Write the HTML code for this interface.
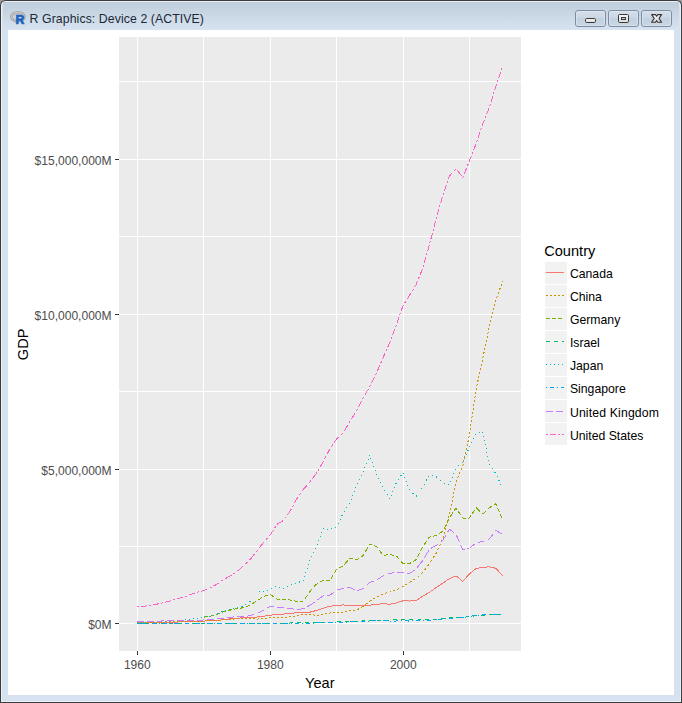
<!DOCTYPE html><html><head><meta charset="utf-8"><style>
html,body{margin:0;padding:0;width:682px;height:703px;overflow:hidden;background:#fff}
svg{display:block;font-family:"Liberation Sans",sans-serif}
</style></head><body>
<svg width="682" height="703" viewBox="0 0 682 703">
<defs><linearGradient id="tb" x1="0" y1="0" x2="0" y2="1"><stop offset="0" stop-color="#bfcedb"/><stop offset="1" stop-color="#d7e3f0"/></linearGradient>
<linearGradient id="btn" x1="0" y1="0" x2="0" y2="1"><stop offset="0" stop-color="#d5dfea"/><stop offset="0.45" stop-color="#cbd7e4"/><stop offset="0.5" stop-color="#c3d0de"/><stop offset="1" stop-color="#c9d6e4"/></linearGradient>
<linearGradient id="ico" x1="0" y1="0" x2="0" y2="1"><stop offset="0" stop-color="#f7f7f7"/><stop offset="1" stop-color="#d9d9d9"/></linearGradient></defs>
<rect x="0" y="0" width="682" height="10" fill="#9c9c9c"/>
<path d="M0,703 V6 Q0,0 6,0 H676 Q682,0 682,6 V703 Z" fill="#3d3d3d"/>
<path d="M1,702 V6 Q1,1 6,1 H676 Q681,1 681,6 V702 Z" fill="#eaf0f7"/>
<path d="M2,701 V7 Q2,2 7,2 H675 Q680,2 680,7 V701 Z" fill="#d6e2ef"/>
<rect x="3" y="2" width="676" height="28" fill="url(#tb)"/>
<rect x="8" y="30" width="666" height="665" fill="#fff"/>
<ellipse cx="17.9" cy="16.8" rx="6.5" ry="4.3" fill="none" stroke="#a9a9a9" stroke-width="3"/>
<ellipse cx="17.9" cy="16.6" rx="6.3" ry="4.0" fill="none" stroke="#d2d2d2" stroke-width="0.9"/>
<text x="15.6" y="23.8" font-size="12.2" font-weight="bold" fill="#1b62c4" stroke="#1b62c4" stroke-width="0.7">R</text>
<text x="29.6" y="22.5" font-size="12.25" letter-spacing="0.1" fill="#1c2838">R Graphics: Device 2 (ACTIVE)</text>
<rect x="575.5" y="10.5" width="30" height="16" rx="2.5" fill="url(#btn)" stroke="#7d8ca4"/>
<rect x="576.5" y="11.5" width="28" height="14" rx="1.5" fill="none" stroke="#e3eaf2" stroke-opacity="0.6"/>
<rect x="608.5" y="10.5" width="30" height="16" rx="2.5" fill="url(#btn)" stroke="#7d8ca4"/>
<rect x="609.5" y="11.5" width="28" height="14" rx="1.5" fill="none" stroke="#e3eaf2" stroke-opacity="0.6"/>
<rect x="641.5" y="10.5" width="30" height="16" rx="2.5" fill="url(#btn)" stroke="#7d8ca4"/>
<rect x="642.5" y="11.5" width="28" height="14" rx="1.5" fill="none" stroke="#e3eaf2" stroke-opacity="0.6"/>
<rect x="585.5" y="18.5" width="10" height="4" rx="1.2" fill="url(#ico)" stroke="#3a3a3a"/>
<rect x="618.5" y="14.5" width="10" height="8" rx="1.2" fill="url(#ico)" stroke="#3a3a3a"/>
<rect x="621.5" y="17.5" width="4" height="2" fill="#c3cfdc" stroke="#3a3a3a"/>
<path d="M651.6,14.6 H655.5 L656.6,16.3 L657.7,14.6 H661.6 L659,18.4 L661.6,22.2 H657.7 L656.6,20.5 L655.5,22.2 H651.6 L654.2,18.4 Z" fill="url(#ico)" stroke="#363636" stroke-width="1.1" stroke-linejoin="round"/>
<rect x="119" y="37" width="402" height="614" fill="#ebebeb"/>
<rect x="137" y="37" width="1" height="614" fill="#fff"/>
<rect x="203" y="37" width="1" height="614" fill="#fff"/>
<rect x="270" y="37" width="1" height="614" fill="#fff"/>
<rect x="336" y="37" width="1" height="614" fill="#fff"/>
<rect x="403" y="37" width="1" height="614" fill="#fff"/>
<rect x="469" y="37" width="1" height="614" fill="#fff"/>
<rect x="119" y="81" width="402" height="1" fill="#fff"/>
<rect x="119" y="159" width="402" height="1" fill="#fff"/>
<rect x="119" y="236" width="402" height="1" fill="#fff"/>
<rect x="119" y="314" width="402" height="1" fill="#fff"/>
<rect x="119" y="391" width="402" height="1" fill="#fff"/>
<rect x="119" y="469" width="402" height="1" fill="#fff"/>
<rect x="119" y="546" width="402" height="1" fill="#fff"/>
<rect x="119" y="623" width="402" height="1" fill="#fff"/>
<path d="M137.40,622.53 L144.04,622.54 L150.68,622.52 L157.32,622.44 L163.96,622.32 L170.60,622.19 L177.24,622.02 L183.88,621.91 L190.52,621.77 L197.16,621.59 L203.80,621.08 L210.44,620.73 L217.08,620.30 L223.72,619.74 L230.36,618.84 L237.00,618.42 L243.64,617.41 L250.28,617.25 L256.92,617.04 L263.56,616.28 L270.20,615.33 L276.84,614.33 L283.48,614.10 L290.12,613.27 L296.76,612.81 L303.40,612.52 L310.04,612.13 L316.68,610.46 L323.32,608.10 L329.96,606.32 L336.60,605.43 L343.24,604.92 L349.88,605.48 L356.52,605.95 L363.16,605.92 L369.80,605.12 L376.44,604.36 L383.08,603.61 L389.72,604.26 L396.36,602.89 L403.00,600.84 L409.64,601.02 L416.28,600.36 L422.92,596.20 L429.56,592.15 L436.20,587.63 L442.84,583.11 L449.48,578.51 L456.12,575.88 L462.76,581.38 L469.40,573.89 L476.04,568.47 L482.68,567.37 L489.32,566.80 L495.96,568.34 L502.60,575.78" fill="none" stroke="#F8766D" stroke-width="1" shape-rendering="crispEdges"/>
<g fill="none" stroke="#CD9600" stroke-width="1" shape-rendering="crispEdges"><path d="M137.40,621.95 L144.04,622.25" stroke-dasharray="2.002 2.002" stroke-dashoffset="0.000"/><path d="M144.04,622.25 L150.68,622.34" stroke-dasharray="2.000 2.000" stroke-dashoffset="2.640"/><path d="M150.68,622.34 L157.32,622.23" stroke-dasharray="2.000 2.000" stroke-dashoffset="1.280"/><path d="M157.32,622.23 L163.96,621.95" stroke-dasharray="2.002 2.002" stroke-dashoffset="3.923"/><path d="M163.96,621.95 L170.60,621.62" stroke-dasharray="2.002 2.002" stroke-dashoffset="2.563"/><path d="M170.60,621.62 L177.24,621.43" stroke-dasharray="2.001 2.001" stroke-dashoffset="1.201"/><path d="M177.24,621.43 L183.88,621.54" stroke-dasharray="2.000 2.000" stroke-dashoffset="3.841"/><path d="M183.88,621.54 L190.52,621.61" stroke-dasharray="2.000 2.000" stroke-dashoffset="2.480"/><path d="M190.52,621.61 L197.16,621.33" stroke-dasharray="2.002 2.002" stroke-dashoffset="1.121"/><path d="M197.16,621.33 L203.80,620.94" stroke-dasharray="2.004 2.004" stroke-dashoffset="3.767"/><path d="M203.80,620.94 L210.44,620.71" stroke-dasharray="2.001 2.001" stroke-dashoffset="2.401"/><path d="M210.44,620.71 L217.08,620.28" stroke-dasharray="2.004 2.004" stroke-dashoffset="1.042"/><path d="M217.08,620.28 L223.72,619.52" stroke-dasharray="2.013 2.013" stroke-dashoffset="3.704"/><path d="M223.72,619.52 L230.36,619.34" stroke-dasharray="2.001 2.001" stroke-dashoffset="2.321"/><path d="M230.36,619.34 L237.00,618.75" stroke-dasharray="2.008 2.008" stroke-dashoffset="0.964"/><path d="M237.00,618.75 L243.64,619.04" stroke-dasharray="2.002 2.002" stroke-dashoffset="3.604"/><path d="M243.64,619.04 L250.28,618.39" stroke-dasharray="2.010 2.010" stroke-dashoffset="2.251"/><path d="M250.28,618.39 L256.92,619.18" stroke-dasharray="2.014 2.014" stroke-dashoffset="0.886"/><path d="M256.92,619.18 L263.56,618.28" stroke-dasharray="2.018 2.018" stroke-dashoffset="3.552"/><path d="M263.56,618.28 L270.20,617.89" stroke-dasharray="2.004 2.004" stroke-dashoffset="2.164"/><path d="M270.20,617.89 L276.84,617.74" stroke-dasharray="2.000 2.000" stroke-dashoffset="0.800"/><path d="M276.84,617.74 L283.48,617.46" stroke-dasharray="2.002 2.002" stroke-dashoffset="3.443"/><path d="M283.48,617.46 L290.12,616.66" stroke-dasharray="2.014 2.014" stroke-dashoffset="2.095"/><path d="M290.12,616.66 L296.76,615.76" stroke-dasharray="2.018 2.018" stroke-dashoffset="0.727"/><path d="M296.76,615.76 L303.40,614.23" stroke-dasharray="2.053 2.053" stroke-dashoffset="3.449"/><path d="M303.40,614.23 L310.04,614.50" stroke-dasharray="2.002 2.002" stroke-dashoffset="2.002"/><path d="M310.04,614.50 L316.68,615.36" stroke-dasharray="2.017 2.017" stroke-dashoffset="0.645"/><path d="M316.68,615.36 L323.32,614.14" stroke-dasharray="2.034 2.034" stroke-dashoffset="3.335"/><path d="M323.32,614.14 L329.96,613.04" stroke-dasharray="2.027 2.027" stroke-dashoffset="1.946"/><path d="M329.96,613.04 L336.60,612.64" stroke-dasharray="2.004 2.004" stroke-dashoffset="0.561"/><path d="M336.60,612.64 L343.24,611.94" stroke-dasharray="2.011 2.011" stroke-dashoffset="3.218"/><path d="M343.24,611.94 L349.88,610.59" stroke-dasharray="2.041 2.041" stroke-dashoffset="1.877"/><path d="M349.88,610.59 L356.52,610.04" stroke-dasharray="2.007 2.007" stroke-dashoffset="0.482"/><path d="M356.52,610.04 L363.16,606.34" stroke-dasharray="2.289 2.289" stroke-dashoffset="3.572"/><path d="M363.16,606.34 L369.80,601.08" stroke-dasharray="2.552 2.552" stroke-dashoffset="2.246"/><path d="M369.80,601.08 L376.44,597.08" stroke-dasharray="2.334 2.334" stroke-dashoffset="0.467"/><path d="M376.44,597.08 L383.08,594.05" stroke-dasharray="2.198 2.198" stroke-dashoffset="3.341"/><path d="M383.08,594.05 L389.72,591.97" stroke-dasharray="2.096 2.096" stroke-dashoffset="1.761"/><path d="M389.72,591.97 L396.36,589.96" stroke-dasharray="2.090 2.090" stroke-dashoffset="0.334"/><path d="M396.36,589.96 L403.00,586.33" stroke-dasharray="2.279 2.279" stroke-dashoffset="3.373"/><path d="M403.00,586.33 L409.64,582.37" stroke-dasharray="2.329 2.329" stroke-dashoffset="1.863"/><path d="M409.64,582.37 L416.28,578.31" stroke-dasharray="2.344 2.344" stroke-dashoffset="0.281"/><path d="M416.28,578.31 L422.92,572.44" stroke-dasharray="2.669 2.669" stroke-dashoffset="3.843"/><path d="M422.92,572.44 L429.56,563.32" stroke-dasharray="2.473 2.473" stroke-dashoffset="1.880"/><path d="M429.56,563.32 L436.20,553.09" stroke-dasharray="2.384 2.384" stroke-dashoffset="3.154"/><path d="M436.20,553.09 L442.84,538.67" stroke-dasharray="2.202 2.202" stroke-dashoffset="0.963"/><path d="M442.84,538.67 L449.48,513.92" stroke-dasharray="2.071 2.071" stroke-dashoffset="3.409"/><path d="M449.48,513.92 L456.12,481.56" stroke-dasharray="2.042 2.042" stroke-dashoffset="0.043"/><path d="M456.12,481.56 L462.76,465.74" stroke-dasharray="2.169 2.169" stroke-dashoffset="0.432"/><path d="M462.76,465.74 L469.40,435.09" stroke-dasharray="2.046 2.046" stroke-dashoffset="0.232"/><path d="M469.40,435.09 L476.04,389.56" stroke-dasharray="2.021 2.021" stroke-dashoffset="2.902"/><path d="M476.04,389.56 L482.68,359.00" stroke-dasharray="2.047 2.047" stroke-dashoffset="0.415"/><path d="M482.68,359.00 L489.32,326.62" stroke-dasharray="2.042 2.042" stroke-dashoffset="3.026"/><path d="M489.32,326.62 L495.96,299.55" stroke-dasharray="2.059 2.059" stroke-dashoffset="3.440"/><path d="M495.96,299.55 L502.60,281.54" stroke-dasharray="2.132 2.132" stroke-dashoffset="2.573"/></g>
<g fill="none" stroke="#7CAE00" stroke-width="1" shape-rendering="crispEdges"><path d="M203.80,617.12 L210.44,616.07" stroke-dasharray="4.050 2.025" stroke-dashoffset="0.000"/><path d="M210.44,616.07 L217.08,614.53" stroke-dasharray="4.107 2.054" stroke-dashoffset="0.657"/><path d="M217.08,614.53 L223.72,611.48" stroke-dasharray="4.402 2.201" stroke-dashoffset="1.409"/><path d="M223.72,611.48 L230.36,610.03" stroke-dasharray="4.094 2.047" stroke-dashoffset="1.965"/><path d="M230.36,610.03 L237.00,608.62" stroke-dasharray="4.088 2.044" stroke-dashoffset="2.616"/><path d="M237.00,608.62 L243.64,607.72" stroke-dasharray="4.037 2.018" stroke-dashoffset="3.229"/><path d="M243.64,607.72 L250.28,605.22" stroke-dasharray="4.274 2.137" stroke-dashoffset="4.103"/><path d="M250.28,605.22 L256.92,600.89" stroke-dasharray="4.775 2.387" stroke-dashoffset="5.347"/><path d="M256.92,600.89 L263.56,596.54" stroke-dasharray="4.784 2.392" stroke-dashoffset="6.123"/><path d="M263.56,596.54 L270.20,594.40" stroke-dasharray="4.202 2.101" stroke-dashoffset="6.050"/><path d="M270.20,594.40 L276.84,599.04" stroke-dasharray="4.878 2.439" stroke-dashoffset="0.488"/><path d="M276.84,599.04 L283.48,599.78" stroke-dasharray="4.025 2.012" stroke-dashoffset="1.046"/><path d="M283.48,599.78 L290.12,599.96" stroke-dasharray="4.002 2.001" stroke-dashoffset="1.681"/><path d="M290.12,599.96 L296.76,601.37" stroke-dasharray="4.089 2.044" stroke-dashoffset="2.372"/><path d="M296.76,601.37 L303.40,601.14" stroke-dasharray="4.002 2.001" stroke-dashoffset="2.962"/><path d="M303.40,601.14 L310.04,591.44" stroke-dasharray="4.847 2.423" stroke-dashoffset="4.362"/><path d="M310.04,591.44 L316.68,583.67" stroke-dasharray="5.263 2.632" stroke-dashoffset="1.715"/><path d="M316.68,583.67 L323.32,580.46" stroke-dasharray="4.445 2.222" stroke-dashoffset="3.409"/><path d="M323.32,580.46 L329.96,580.54" stroke-dasharray="4.000 2.000" stroke-dashoffset="3.708"/><path d="M329.96,580.54 L336.60,569.00" stroke-dasharray="4.614 2.307" stroke-dashoffset="5.015"/><path d="M336.60,569.00 L343.24,565.99" stroke-dasharray="4.391 2.195" stroke-dashoffset="4.276"/><path d="M343.24,565.99 L349.88,557.86" stroke-dasharray="5.166 2.583" stroke-dashoffset="5.857"/><path d="M349.88,557.86 L356.52,559.73" stroke-dasharray="4.155 2.077" stroke-dashoffset="0.687"/><path d="M356.52,559.73 L363.16,555.59" stroke-dasharray="4.713 2.357" stroke-dashoffset="1.533"/><path d="M363.16,555.59 L369.80,543.81" stroke-dasharray="4.592 2.296" stroke-dashoffset="2.229"/><path d="M369.80,543.81 L376.44,546.55" stroke-dasharray="4.327 2.164" stroke-dashoffset="1.858"/><path d="M376.44,546.55 L383.08,555.39" stroke-dasharray="5.004 2.502" stroke-dashoffset="2.949"/><path d="M383.08,555.39 L389.72,554.54" stroke-dasharray="4.032 2.016" stroke-dashoffset="5.230"/><path d="M389.72,554.54 L396.36,555.93" stroke-dasharray="4.086 2.043" stroke-dashoffset="5.954"/><path d="M396.36,555.93 L403.00,563.57" stroke-dasharray="5.298 2.649" stroke-dashoffset="0.621"/><path d="M403.00,563.57 L409.64,563.61" stroke-dasharray="4.000 2.000" stroke-dashoffset="2.115"/><path d="M409.64,563.61 L416.28,559.51" stroke-dasharray="4.703 2.351" stroke-dashoffset="3.239"/><path d="M416.28,559.51 L422.92,546.42" stroke-dasharray="4.485 2.243" stroke-dashoffset="3.807"/><path d="M422.92,546.42 L429.56,536.74" stroke-dasharray="4.851 2.426" stroke-dashoffset="5.437"/><path d="M429.56,536.74 L436.20,535.74" stroke-dasharray="4.046 2.023" stroke-dashoffset="2.184"/><path d="M436.20,535.74 L442.84,531.16" stroke-dasharray="4.856 2.428" stroke-dashoffset="3.398"/><path d="M442.84,531.16 L449.48,517.84" stroke-dasharray="4.469 2.234" stroke-dashoffset="3.842"/><path d="M449.48,517.84 L456.12,507.95" stroke-dasharray="4.818 2.409" stroke-dashoffset="5.743"/><path d="M456.12,507.95 L462.76,518.28" stroke-dasharray="4.755 2.377" stroke-dashoffset="3.159"/><path d="M462.76,518.28 L469.40,518.10" stroke-dasharray="4.001 2.001" stroke-dashoffset="0.989"/><path d="M469.40,518.10 L476.04,507.56" stroke-dasharray="4.728 2.364" stroke-dashoffset="1.926"/><path d="M476.04,507.56 L482.68,514.18" stroke-dasharray="5.646 2.823" stroke-dashoffset="0.233"/><path d="M482.68,514.18 L489.32,507.72" stroke-dasharray="5.578 2.789" stroke-dashoffset="1.122"/><path d="M489.32,507.72 L495.96,503.80" stroke-dasharray="4.646 2.323" stroke-dashoffset="1.678"/><path d="M495.96,503.80 L502.60,519.75" stroke-dasharray="4.333 2.166" stroke-dashoffset="2.258"/></g>
<g fill="none" stroke="#00BE67" stroke-width="1" shape-rendering="crispEdges"><path d="M137.40,623.72 L144.04,623.71" stroke-dasharray="4.000 4.000" stroke-dashoffset="0.000"/><path d="M144.04,623.71 L150.68,623.70" stroke-dasharray="4.000 4.000" stroke-dashoffset="6.640"/><path d="M150.68,623.70 L157.32,623.69" stroke-dasharray="4.000 4.000" stroke-dashoffset="5.280"/><path d="M157.32,623.69 L163.96,623.68" stroke-dasharray="4.000 4.000" stroke-dashoffset="3.920"/><path d="M163.96,623.68 L170.60,623.68" stroke-dasharray="4.000 4.000" stroke-dashoffset="2.560"/><path d="M170.60,623.68 L177.24,623.67" stroke-dasharray="4.000 4.000" stroke-dashoffset="1.200"/><path d="M177.24,623.67 L183.88,623.66" stroke-dasharray="4.000 4.000" stroke-dashoffset="7.840"/><path d="M183.88,623.66 L190.52,623.65" stroke-dasharray="4.000 4.000" stroke-dashoffset="6.480"/><path d="M190.52,623.65 L197.16,623.64" stroke-dasharray="4.000 4.000" stroke-dashoffset="5.120"/><path d="M197.16,623.64 L203.80,623.63" stroke-dasharray="4.000 4.000" stroke-dashoffset="3.760"/><path d="M203.80,623.63 L210.44,623.58" stroke-dasharray="4.000 4.000" stroke-dashoffset="2.400"/><path d="M210.44,623.58 L217.08,623.53" stroke-dasharray="4.000 4.000" stroke-dashoffset="1.040"/><path d="M217.08,623.53 L223.72,623.48" stroke-dasharray="4.000 4.000" stroke-dashoffset="7.680"/><path d="M223.72,623.48 L230.36,623.43" stroke-dasharray="4.000 4.000" stroke-dashoffset="6.320"/><path d="M230.36,623.43 L237.00,623.39" stroke-dasharray="4.000 4.000" stroke-dashoffset="4.960"/><path d="M237.00,623.39 L243.64,623.33" stroke-dasharray="4.000 4.000" stroke-dashoffset="3.600"/><path d="M243.64,623.33 L250.28,623.27" stroke-dasharray="4.000 4.000" stroke-dashoffset="2.240"/><path d="M250.28,623.27 L256.92,623.21" stroke-dasharray="4.000 4.000" stroke-dashoffset="0.880"/><path d="M256.92,623.21 L263.56,623.16" stroke-dasharray="4.000 4.000" stroke-dashoffset="7.520"/><path d="M263.56,623.16 L270.20,623.10" stroke-dasharray="4.000 4.000" stroke-dashoffset="6.160"/><path d="M270.20,623.10 L276.84,623.07" stroke-dasharray="4.000 4.000" stroke-dashoffset="4.800"/><path d="M276.84,623.07 L283.48,623.04" stroke-dasharray="4.000 4.000" stroke-dashoffset="3.440"/><path d="M283.48,623.04 L290.12,623.01" stroke-dasharray="4.000 4.000" stroke-dashoffset="2.080"/><path d="M290.12,623.01 L296.76,622.98" stroke-dasharray="4.000 4.000" stroke-dashoffset="0.720"/><path d="M296.76,622.98 L303.40,622.96" stroke-dasharray="4.000 4.000" stroke-dashoffset="7.360"/><path d="M303.40,622.96 L310.04,622.76" stroke-dasharray="4.002 4.002" stroke-dashoffset="6.003"/><path d="M310.04,622.76 L316.68,622.56" stroke-dasharray="4.002 4.002" stroke-dashoffset="4.642"/><path d="M316.68,622.56 L323.32,622.36" stroke-dasharray="4.002 4.002" stroke-dashoffset="3.281"/><path d="M323.32,622.36 L329.96,622.16" stroke-dasharray="4.002 4.002" stroke-dashoffset="1.921"/><path d="M329.96,622.16 L336.60,621.96" stroke-dasharray="4.002 4.002" stroke-dashoffset="0.560"/><path d="M336.60,621.96 L343.24,621.71" stroke-dasharray="4.003 4.003" stroke-dashoffset="7.205"/><path d="M343.24,621.71 L349.88,621.46" stroke-dasharray="4.003 4.003" stroke-dashoffset="5.844"/><path d="M349.88,621.46 L356.52,621.21" stroke-dasharray="4.003 4.003" stroke-dashoffset="4.483"/><path d="M356.52,621.21 L363.16,620.96" stroke-dasharray="4.003 4.003" stroke-dashoffset="3.122"/><path d="M363.16,620.96 L369.80,620.71" stroke-dasharray="4.003 4.003" stroke-dashoffset="1.761"/><path d="M369.80,620.71 L376.44,620.51" stroke-dasharray="4.002 4.002" stroke-dashoffset="0.400"/><path d="M376.44,620.51 L383.08,620.32" stroke-dasharray="4.002 4.002" stroke-dashoffset="7.043"/><path d="M383.08,620.32 L389.72,620.12" stroke-dasharray="4.002 4.002" stroke-dashoffset="5.682"/><path d="M389.72,620.12 L396.36,619.92" stroke-dasharray="4.002 4.002" stroke-dashoffset="4.322"/><path d="M396.36,619.92 L403.00,619.73" stroke-dasharray="4.002 4.002" stroke-dashoffset="2.961"/><path d="M403.00,619.73 L409.64,619.89" stroke-dasharray="4.001 4.001" stroke-dashoffset="1.600"/><path d="M409.64,619.89 L416.28,620.06" stroke-dasharray="4.001 4.001" stroke-dashoffset="0.240"/><path d="M416.28,620.06 L422.92,619.83" stroke-dasharray="4.002 4.002" stroke-dashoffset="6.884"/><path d="M422.92,619.83 L429.56,619.61" stroke-dasharray="4.002 4.002" stroke-dashoffset="5.523"/><path d="M429.56,619.61 L436.20,619.38" stroke-dasharray="4.002 4.002" stroke-dashoffset="4.162"/><path d="M436.20,619.38 L442.84,618.62" stroke-dasharray="4.026 4.026" stroke-dashoffset="2.818"/><path d="M442.84,618.62 L449.48,617.86" stroke-dasharray="4.026 4.026" stroke-dashoffset="1.449"/><path d="M449.48,617.86 L456.12,617.09" stroke-dasharray="4.026 4.026" stroke-dashoffset="0.081"/><path d="M456.12,617.09 L462.76,617.40" stroke-dasharray="4.004 4.004" stroke-dashoffset="6.727"/><path d="M462.76,617.40 L469.40,616.57" stroke-dasharray="4.031 4.031" stroke-dashoffset="5.401"/><path d="M469.40,616.57 L476.04,615.71" stroke-dasharray="4.033 4.033" stroke-dashoffset="4.033"/><path d="M476.04,615.71 L482.68,615.84" stroke-dasharray="4.001 4.001" stroke-dashoffset="2.640"/><path d="M482.68,615.84 L489.32,614.75" stroke-dasharray="4.053 4.053" stroke-dashoffset="1.297"/><path d="M489.32,614.75 L495.96,614.25" stroke-dasharray="4.012 4.012" stroke-dashoffset="7.943"/><path d="M495.96,614.25 L502.60,614.54" stroke-dasharray="4.004 4.004" stroke-dashoffset="6.566"/></g>
<g fill="none" stroke="#00BFC4" stroke-width="1" shape-rendering="crispEdges"><path d="M137.40,622.43 L144.04,622.15" stroke-dasharray="1.001 3.003" stroke-dashoffset="0.000"/><path d="M144.04,622.15 L150.68,621.92" stroke-dasharray="1.001 3.002" stroke-dashoffset="2.641"/><path d="M150.68,621.92 L157.32,621.65" stroke-dasharray="1.001 3.003" stroke-dashoffset="1.281"/><path d="M157.32,621.65 L163.96,621.27" stroke-dasharray="1.002 3.005" stroke-dashoffset="3.926"/><path d="M163.96,621.27 L170.60,620.99" stroke-dasharray="1.001 3.003" stroke-dashoffset="2.562"/><path d="M170.60,620.99 L177.24,620.53" stroke-dasharray="1.002 3.007" stroke-dashoffset="1.203"/><path d="M177.24,620.53 L183.88,619.97" stroke-dasharray="1.004 3.011" stroke-dashoffset="3.854"/><path d="M183.88,619.97 L190.52,619.27" stroke-dasharray="1.006 3.017" stroke-dashoffset="2.494"/><path d="M190.52,619.27 L197.16,618.47" stroke-dasharray="1.007 3.021" stroke-dashoffset="1.128"/><path d="M197.16,618.47 L203.80,617.22" stroke-dasharray="1.018 3.053" stroke-dashoffset="3.826"/><path d="M203.80,617.22 L210.44,616.37" stroke-dasharray="1.008 3.025" stroke-dashoffset="2.420"/><path d="M210.44,616.37 L217.08,613.96" stroke-dasharray="1.064 3.191" stroke-dashoffset="1.106"/><path d="M217.08,613.96 L223.72,610.43" stroke-dasharray="1.132 3.397" stroke-dashoffset="4.168"/><path d="M223.72,610.43 L230.36,608.96" stroke-dasharray="1.024 3.073" stroke-dashoffset="2.376"/><path d="M230.36,608.96 L237.00,607.67" stroke-dasharray="1.019 3.057" stroke-dashoffset="0.978"/><path d="M237.00,607.67 L243.64,605.67" stroke-dasharray="1.044 3.133" stroke-dashoffset="3.760"/><path d="M243.64,605.67 L250.28,601.48" stroke-dasharray="1.182 3.545" stroke-dashoffset="2.647"/><path d="M250.28,601.48 L256.92,592.45" stroke-dasharray="1.241 3.723" stroke-dashoffset="1.092"/><path d="M256.92,592.45 L263.56,591.17" stroke-dasharray="1.018 3.055" stroke-dashoffset="1.954"/><path d="M263.56,591.17 L270.20,589.61" stroke-dasharray="1.027 3.082" stroke-dashoffset="0.574"/><path d="M270.20,589.61 L276.84,586.10" stroke-dasharray="1.131 3.394" stroke-dashoffset="3.618"/><path d="M276.84,586.10 L283.48,588.71" stroke-dasharray="1.075 3.224" stroke-dashoffset="1.976"/><path d="M283.48,588.71 L290.12,585.34" stroke-dasharray="1.121 3.363" stroke-dashoffset="0.537"/><path d="M290.12,585.34 L296.76,583.02" stroke-dasharray="1.059 3.178" stroke-dashoffset="3.304"/><path d="M296.76,583.02 L303.40,580.53" stroke-dasharray="1.068 3.204" stroke-dashoffset="1.878"/><path d="M303.40,580.53 L310.04,559.49" stroke-dasharray="1.049 3.146" stroke-dashoffset="0.418"/><path d="M310.04,559.49 L316.68,545.45" stroke-dasharray="1.106 3.319" stroke-dashoffset="1.585"/><path d="M316.68,545.45 L323.32,528.78" stroke-dasharray="1.076 3.229" stroke-dashoffset="3.739"/><path d="M323.32,528.78 L329.96,529.30" stroke-dasharray="1.003 3.009" stroke-dashoffset="0.144"/><path d="M329.96,529.30 L336.60,526.89" stroke-dasharray="1.064 3.191" stroke-dashoffset="2.961"/><path d="M336.60,526.89 L343.24,512.92" stroke-dasharray="1.107 3.322" stroke-dashoffset="1.576"/><path d="M343.24,512.92 L349.88,502.89" stroke-dasharray="1.199 3.597" stroke-dashoffset="4.068"/><path d="M349.88,502.89 L356.52,486.02" stroke-dasharray="1.075 3.224" stroke-dashoffset="1.534"/><path d="M356.52,486.02 L363.16,472.01" stroke-dasharray="1.107 3.320" stroke-dashoffset="2.540"/><path d="M363.16,472.01 L369.80,455.24" stroke-dasharray="1.076 3.227" stroke-dashoffset="0.328"/><path d="M369.80,455.24 L376.44,474.28" stroke-dasharray="1.059 3.177" stroke-dashoffset="1.137"/><path d="M376.44,474.28 L383.08,487.24" stroke-dasharray="1.124 3.371" stroke-dashoffset="0.123"/><path d="M383.08,487.24 L389.72,499.06" stroke-dasharray="1.147 3.441" stroke-dashoffset="1.228"/><path d="M389.72,499.06 L396.36,482.68" stroke-dasharray="1.079 3.237" stroke-dashoffset="0.964"/><path d="M396.36,482.68 L403.00,472.61" stroke-dasharray="1.198 3.594" stroke-dashoffset="1.528"/><path d="M403.00,472.61 L409.64,490.68" stroke-dasharray="1.065 3.196" stroke-dashoffset="3.559"/><path d="M409.64,490.68 L416.28,496.51" stroke-dasharray="1.331 3.992" stroke-dashoffset="1.870"/><path d="M416.28,496.51 L422.92,486.28" stroke-dasharray="1.192 3.577" stroke-dashoffset="0.055"/><path d="M422.92,486.28 L429.56,474.85" stroke-dasharray="1.157 3.470" stroke-dashoffset="2.628"/><path d="M429.56,474.85 L436.20,476.70" stroke-dasharray="1.038 3.114" stroke-dashoffset="1.763"/><path d="M436.20,476.70 L442.84,483.66" stroke-dasharray="1.382 4.146" stroke-dashoffset="0.468"/><path d="M442.84,483.66 L449.48,484.13" stroke-dasharray="1.002 3.007" stroke-dashoffset="3.307"/><path d="M449.48,484.13 L456.12,467.96" stroke-dasharray="1.081 3.243" stroke-dashoffset="2.096"/><path d="M456.12,467.96 L462.76,461.98" stroke-dasharray="1.346 4.039" stroke-dashoffset="2.833"/><path d="M462.76,461.98 L469.40,447.48" stroke-dasharray="1.100 3.300" stroke-dashoffset="0.819"/><path d="M469.40,447.48 L476.04,433.33" stroke-dasharray="1.105 3.314" stroke-dashoffset="3.582"/><path d="M476.04,433.33 L482.68,431.92" stroke-dasharray="1.022 3.067" stroke-dashoffset="1.423"/><path d="M482.68,431.92 L489.32,464.32" stroke-dasharray="1.021 3.062" stroke-dashoffset="0.032"/><path d="M489.32,464.32 L495.96,473.82" stroke-dasharray="1.220 3.661" stroke-dashoffset="0.529"/><path d="M495.96,473.82 L502.60,488.22" stroke-dasharray="1.101 3.303" stroke-dashoffset="2.125"/></g>
<g fill="none" stroke="#00A9FF" stroke-width="1" shape-rendering="crispEdges"><path d="M137.40,623.78 L144.04,623.78" stroke-dasharray="1.000 3.000 4.000 3.000" stroke-dashoffset="0.000"/><path d="M144.04,623.78 L150.68,623.78" stroke-dasharray="1.000 3.000 4.000 3.000" stroke-dashoffset="6.640"/><path d="M150.68,623.78 L157.32,623.77" stroke-dasharray="1.000 3.000 4.000 3.000" stroke-dashoffset="2.280"/><path d="M157.32,623.77 L163.96,623.77" stroke-dasharray="1.000 3.000 4.000 3.000" stroke-dashoffset="8.920"/><path d="M163.96,623.77 L170.60,623.77" stroke-dasharray="1.000 3.000 4.000 3.000" stroke-dashoffset="4.560"/><path d="M170.60,623.77 L177.24,623.76" stroke-dasharray="1.000 3.000 4.000 3.000" stroke-dashoffset="0.200"/><path d="M177.24,623.76 L183.88,623.76" stroke-dasharray="1.000 3.000 4.000 3.000" stroke-dashoffset="6.840"/><path d="M183.88,623.76 L190.52,623.75" stroke-dasharray="1.000 3.000 4.000 3.000" stroke-dashoffset="2.480"/><path d="M190.52,623.75 L197.16,623.75" stroke-dasharray="1.000 3.000 4.000 3.000" stroke-dashoffset="9.120"/><path d="M197.16,623.75 L203.80,623.74" stroke-dasharray="1.000 3.000 4.000 3.000" stroke-dashoffset="4.760"/><path d="M203.80,623.74 L210.44,623.72" stroke-dasharray="1.000 3.000 4.000 3.000" stroke-dashoffset="0.400"/><path d="M210.44,623.72 L217.08,623.69" stroke-dasharray="1.000 3.000 4.000 3.000" stroke-dashoffset="7.040"/><path d="M217.08,623.69 L223.72,623.67" stroke-dasharray="1.000 3.000 4.000 3.000" stroke-dashoffset="2.680"/><path d="M223.72,623.67 L230.36,623.64" stroke-dasharray="1.000 3.000 4.000 3.000" stroke-dashoffset="9.320"/><path d="M230.36,623.64 L237.00,623.62" stroke-dasharray="1.000 3.000 4.000 3.000" stroke-dashoffset="4.960"/><path d="M237.00,623.62 L243.64,623.58" stroke-dasharray="1.000 3.000 4.000 3.000" stroke-dashoffset="0.600"/><path d="M243.64,623.58 L250.28,623.55" stroke-dasharray="1.000 3.000 4.000 3.000" stroke-dashoffset="7.240"/><path d="M250.28,623.55 L256.92,623.51" stroke-dasharray="1.000 3.000 4.000 3.000" stroke-dashoffset="2.880"/><path d="M256.92,623.51 L263.56,623.47" stroke-dasharray="1.000 3.000 4.000 3.000" stroke-dashoffset="9.520"/><path d="M263.56,623.47 L270.20,623.43" stroke-dasharray="1.000 3.000 4.000 3.000" stroke-dashoffset="5.160"/><path d="M270.20,623.43 L276.84,623.39" stroke-dasharray="1.000 3.000 4.000 3.000" stroke-dashoffset="0.800"/><path d="M276.84,623.39 L283.48,623.34" stroke-dasharray="1.000 3.000 4.000 3.000" stroke-dashoffset="7.440"/><path d="M283.48,623.34 L290.12,623.30" stroke-dasharray="1.000 3.000 4.000 3.000" stroke-dashoffset="3.080"/><path d="M290.12,623.30 L296.76,623.26" stroke-dasharray="1.000 3.000 4.000 3.000" stroke-dashoffset="9.720"/><path d="M296.76,623.26 L303.40,623.21" stroke-dasharray="1.000 3.000 4.000 3.000" stroke-dashoffset="5.360"/><path d="M303.40,623.21 L310.04,623.11" stroke-dasharray="1.000 3.000 4.001 3.000" stroke-dashoffset="1.000"/><path d="M310.04,623.11 L316.68,623.00" stroke-dasharray="1.000 3.000 4.001 3.000" stroke-dashoffset="7.641"/><path d="M316.68,623.00 L323.32,622.89" stroke-dasharray="1.000 3.000 4.001 3.000" stroke-dashoffset="3.280"/><path d="M323.32,622.89 L329.96,622.79" stroke-dasharray="1.000 3.000 4.001 3.000" stroke-dashoffset="9.921"/><path d="M329.96,622.79 L336.60,622.68" stroke-dasharray="1.000 3.000 4.001 3.000" stroke-dashoffset="5.561"/><path d="M336.60,622.68 L343.24,622.36" stroke-dasharray="1.001 3.003 4.005 3.003" stroke-dashoffset="1.201"/><path d="M343.24,622.36 L349.88,622.04" stroke-dasharray="1.001 3.003 4.005 3.003" stroke-dashoffset="7.849"/><path d="M349.88,622.04 L356.52,621.72" stroke-dasharray="1.001 3.003 4.005 3.003" stroke-dashoffset="3.484"/><path d="M356.52,621.72 L363.16,621.40" stroke-dasharray="1.001 3.003 4.005 3.003" stroke-dashoffset="10.132"/><path d="M363.16,621.40 L369.80,621.08" stroke-dasharray="1.001 3.003 4.005 3.003" stroke-dashoffset="5.767"/><path d="M369.80,621.08 L376.44,620.89" stroke-dasharray="1.000 3.001 4.002 3.001" stroke-dashoffset="1.401"/><path d="M376.44,620.89 L383.08,620.70" stroke-dasharray="1.000 3.001 4.002 3.001" stroke-dashoffset="8.043"/><path d="M383.08,620.70 L389.72,621.15" stroke-dasharray="1.002 3.007 4.009 3.007" stroke-dashoffset="3.688"/><path d="M389.72,621.15 L396.36,620.99" stroke-dasharray="1.000 3.001 4.001 3.001" stroke-dashoffset="10.323"/><path d="M396.36,620.99 L403.00,620.83" stroke-dasharray="1.000 3.001 4.001 3.001" stroke-dashoffset="5.962"/><path d="M403.00,620.83 L409.64,621.04" stroke-dasharray="1.001 3.002 4.002 3.002" stroke-dashoffset="1.601"/><path d="M409.64,621.04 L416.28,620.74" stroke-dasharray="1.001 3.003 4.004 3.003" stroke-dashoffset="8.248"/><path d="M416.28,620.74 L422.92,620.45" stroke-dasharray="1.001 3.003 4.004 3.003" stroke-dashoffset="3.884"/><path d="M422.92,620.45 L429.56,620.15" stroke-dasharray="1.001 3.003 4.004 3.003" stroke-dashoffset="10.530"/><path d="M429.56,620.15 L436.20,619.86" stroke-dasharray="1.001 3.003 4.004 3.003" stroke-dashoffset="6.166"/><path d="M436.20,619.86 L442.84,619.19" stroke-dasharray="1.005 3.015 4.020 3.015" stroke-dashoffset="1.809"/><path d="M442.84,619.19 L449.48,618.52" stroke-dasharray="1.005 3.015 4.020 3.015" stroke-dashoffset="8.483"/><path d="M449.48,618.52 L456.12,617.85" stroke-dasharray="1.005 3.015 4.020 3.015" stroke-dashoffset="4.101"/><path d="M456.12,617.85 L462.76,617.85" stroke-dasharray="1.000 3.000 4.000 3.000" stroke-dashoffset="10.720"/><path d="M462.76,617.85 L469.40,616.49" stroke-dasharray="1.021 3.062 4.083 3.062" stroke-dashoffset="6.492"/><path d="M469.40,616.49 L476.04,615.27" stroke-dasharray="1.017 3.050 4.066 3.050" stroke-dashoffset="2.033"/><path d="M476.04,615.27 L482.68,614.81" stroke-dasharray="1.002 3.007 4.010 3.007" stroke-dashoffset="8.661"/><path d="M482.68,614.81 L489.32,614.38" stroke-dasharray="1.002 3.006 4.008 3.006" stroke-dashoffset="4.289"/><path d="M489.32,614.38 L495.96,614.16" stroke-dasharray="1.001 3.002 4.002 3.002" stroke-dashoffset="10.926"/><path d="M495.96,614.16 L502.60,614.39" stroke-dasharray="1.001 3.002 4.002 3.002" stroke-dashoffset="6.564"/></g>
<g fill="none" stroke="#C77CFF" stroke-width="1" shape-rendering="crispEdges"><path d="M137.40,621.56 L144.04,621.43" stroke-dasharray="7.001 3.001" stroke-dashoffset="0.000"/><path d="M144.04,621.43 L150.68,621.31" stroke-dasharray="7.001 3.000" stroke-dashoffset="6.641"/><path d="M150.68,621.31 L157.32,621.16" stroke-dasharray="7.002 3.001" stroke-dashoffset="3.281"/><path d="M157.32,621.16 L163.96,620.92" stroke-dasharray="7.004 3.002" stroke-dashoffset="9.926"/><path d="M163.96,620.92 L170.60,620.69" stroke-dasharray="7.004 3.002" stroke-dashoffset="6.564"/><path d="M170.60,620.69 L177.24,620.49" stroke-dasharray="7.003 3.001" stroke-dashoffset="3.201"/><path d="M177.24,620.49 L183.88,620.36" stroke-dasharray="7.001 3.001" stroke-dashoffset="9.842"/><path d="M183.88,620.36 L190.52,620.56" stroke-dasharray="7.003 3.001" stroke-dashoffset="6.483"/><path d="M190.52,620.56 L197.16,620.31" stroke-dasharray="7.005 3.002" stroke-dashoffset="3.122"/><path d="M197.16,620.31 L203.80,619.95" stroke-dasharray="7.011 3.005" stroke-dashoffset="9.775"/><path d="M203.80,619.95 L210.44,619.41" stroke-dasharray="7.022 3.010" stroke-dashoffset="6.421"/><path d="M210.44,619.41 L217.08,618.85" stroke-dasharray="7.025 3.011" stroke-dashoffset="3.051"/><path d="M217.08,618.85 L223.72,618.04" stroke-dasharray="7.051 3.022" stroke-dashoffset="9.751"/><path d="M223.72,618.04 L230.36,617.42" stroke-dasharray="7.030 3.013" stroke-dashoffset="6.347"/><path d="M230.36,617.42 L237.00,616.32" stroke-dasharray="7.096 3.041" stroke-dashoffset="3.001"/><path d="M237.00,616.32 L243.64,616.60" stroke-dasharray="7.006 3.003" stroke-dashoffset="9.609"/><path d="M243.64,616.60 L250.28,615.66" stroke-dasharray="7.070 3.030" stroke-dashoffset="6.303"/><path d="M250.28,615.66 L256.92,613.41" stroke-dasharray="7.392 3.168" stroke-dashoffset="3.041"/><path d="M256.92,613.41 L263.56,610.22" stroke-dasharray="7.764 3.327" stroke-dashoffset="10.559"/><path d="M263.56,610.22 L270.20,606.33" stroke-dasharray="8.117 3.479" stroke-dashoffset="7.143"/><path d="M270.20,606.33 L276.84,607.07" stroke-dasharray="7.044 3.019" stroke-dashoffset="2.818"/><path d="M276.84,607.07 L283.48,607.87" stroke-dasharray="7.050 3.022" stroke-dashoffset="9.508"/><path d="M283.48,607.87 L290.12,608.66" stroke-dasharray="7.049 3.021" stroke-dashoffset="6.122"/><path d="M290.12,608.66 L296.76,609.52" stroke-dasharray="7.060 3.026" stroke-dashoffset="2.743"/><path d="M296.76,609.52 L303.40,608.66" stroke-dasharray="7.058 3.025" stroke-dashoffset="9.438"/><path d="M303.40,608.66 L310.04,605.19" stroke-dasharray="7.899 3.385" stroke-dashoffset="6.770"/><path d="M310.04,605.19 L316.68,600.75" stroke-dasharray="8.424 3.610" stroke-dashoffset="3.177"/><path d="M316.68,600.75 L323.32,595.65" stroke-dasharray="8.827 3.783" stroke-dashoffset="11.702"/><path d="M323.32,595.65 L329.96,595.13" stroke-dasharray="7.021 3.009" stroke-dashoffset="5.938"/><path d="M329.96,595.13 L336.60,589.98" stroke-dasharray="8.855 3.795" stroke-dashoffset="3.238"/><path d="M336.60,589.98 L343.24,588.45" stroke-dasharray="7.184 3.079" stroke-dashoffset="9.442"/><path d="M343.24,588.45 L349.88,587.31" stroke-dasharray="7.103 3.044" stroke-dashoffset="5.926"/><path d="M349.88,587.31 L356.52,590.97" stroke-dasharray="7.993 3.425" stroke-dashoffset="2.832"/><path d="M356.52,590.97 L363.16,588.52" stroke-dasharray="7.460 3.197" stroke-dashoffset="9.719"/><path d="M363.16,588.52 L369.80,582.50" stroke-dasharray="9.446 4.048" stroke-dashoffset="7.773"/><path d="M369.80,582.50 L376.44,580.32" stroke-dasharray="7.369 3.158" stroke-dashoffset="2.526"/><path d="M376.44,580.32 L383.08,575.79" stroke-dasharray="8.477 3.633" stroke-dashoffset="10.947"/><path d="M383.08,575.79 L389.72,573.28" stroke-dasharray="7.483 3.207" stroke-dashoffset="6.072"/><path d="M389.72,573.28 L396.36,572.30" stroke-dasharray="7.075 3.032" stroke-dashoffset="2.345"/><path d="M396.36,572.30 L403.00,572.82" stroke-dasharray="7.021 3.009" stroke-dashoffset="8.987"/><path d="M403.00,572.82 L409.64,573.51" stroke-dasharray="7.037 3.016" stroke-dashoffset="5.630"/><path d="M409.64,573.51 L416.28,568.65" stroke-dasharray="8.672 3.717" stroke-dashoffset="2.775"/><path d="M416.28,568.65 L422.92,560.25" stroke-dasharray="8.924 3.824" stroke-dashoffset="11.320"/><path d="M422.92,560.25 L429.56,549.08" stroke-dasharray="8.143 3.490" stroke-dashoffset="8.467"/><path d="M429.56,549.08 L436.20,545.43" stroke-dasharray="7.985 3.422" stroke-dashoffset="9.640"/><path d="M436.20,545.43 L442.84,540.32" stroke-dasharray="8.837 3.787" stroke-dashoffset="6.427"/><path d="M442.84,540.32 L449.48,529.21" stroke-dasharray="8.155 3.495" stroke-dashoffset="2.017"/><path d="M449.48,529.21 L456.12,534.39" stroke-dasharray="8.879 3.805" stroke-dashoffset="3.601"/><path d="M456.12,534.39 L462.76,550.09" stroke-dasharray="7.600 3.257" stroke-dashoffset="10.292"/><path d="M462.76,550.09 L469.40,548.29" stroke-dasharray="7.254 3.109" stroke-dashoffset="5.369"/><path d="M469.40,548.29 L476.04,542.76" stroke-dasharray="9.104 3.902" stroke-dashoffset="2.368"/><path d="M476.04,542.76 L482.68,541.45" stroke-dasharray="7.135 3.058" stroke-dashoffset="8.624"/><path d="M482.68,541.45 L489.32,539.05" stroke-dasharray="7.444 3.190" stroke-dashoffset="5.425"/><path d="M489.32,539.05 L495.96,530.30" stroke-dasharray="8.786 3.765" stroke-dashoffset="2.185"/><path d="M495.96,530.30 L502.60,534.54" stroke-dasharray="8.308 3.560" stroke-dashoffset="0.587"/></g>
<g fill="none" stroke="#FF61CC" stroke-width="1" shape-rendering="crispEdges"><path d="M137.40,606.99 L144.04,606.38" stroke-dasharray="2.009 2.009 6.026 2.009" stroke-dashoffset="0.000"/><path d="M144.04,606.38 L150.68,605.08" stroke-dasharray="2.038 2.038 6.113 2.038" stroke-dashoffset="6.765"/><path d="M150.68,605.08 L157.32,604.05" stroke-dasharray="2.024 2.024 6.073 2.024" stroke-dashoffset="1.295"/><path d="M157.32,604.05 L163.96,602.59" stroke-dasharray="2.048 2.048 6.143 2.048" stroke-dashoffset="8.109"/><path d="M163.96,602.59 L170.60,600.80" stroke-dasharray="2.071 2.071 6.214 2.071" stroke-dashoffset="2.651"/><path d="M170.60,600.80 L177.24,598.59" stroke-dasharray="2.107 2.107 6.322 2.107" stroke-dashoffset="9.694"/><path d="M177.24,598.59 L183.88,597.15" stroke-dasharray="2.047 2.047 6.140 2.047" stroke-dashoffset="3.930"/><path d="M183.88,597.15 L190.52,594.65" stroke-dasharray="2.137 2.137 6.411 2.137" stroke-dashoffset="11.198"/><path d="M190.52,594.65 L197.16,592.25" stroke-dasharray="2.126 2.126 6.378 2.126" stroke-dashoffset="5.443"/><path d="M197.16,592.25 L203.80,590.52" stroke-dasharray="2.067 2.067 6.201 2.067" stroke-dashoffset="12.154"/><path d="M203.80,590.52 L210.44,587.68" stroke-dasharray="2.176 2.176 6.527 2.176" stroke-dashoffset="6.962"/><path d="M210.44,587.68 L217.08,584.13" stroke-dasharray="2.267 2.267 6.802 2.267" stroke-dashoffset="1.179"/><path d="M217.08,584.13 L223.72,579.61" stroke-dasharray="2.419 2.419 7.258 2.419" stroke-dashoffset="9.290"/><path d="M223.72,579.61 L230.36,575.89" stroke-dasharray="2.293 2.293 6.878 2.293" stroke-dashoffset="2.659"/><path d="M230.36,575.89 L237.00,571.56" stroke-dasharray="2.388 2.388 7.165 2.388" stroke-dashoffset="10.700"/><path d="M237.00,571.56 L243.64,565.72" stroke-dasharray="2.663 2.663 7.989 2.663" stroke-dashoffset="4.793"/><path d="M243.64,565.72 L250.28,559.27" stroke-dasharray="2.788 2.788 8.363 2.788" stroke-dashoffset="14.272"/><path d="M250.28,559.27 L256.92,550.90" stroke-dasharray="2.553 2.553 7.659 2.553" stroke-dashoffset="6.229"/><path d="M256.92,550.90 L263.56,542.38" stroke-dasharray="2.535 2.535 7.606 2.535" stroke-dashoffset="1.585"/><path d="M263.56,542.38 L270.20,535.25" stroke-dasharray="2.734 2.734 8.201 2.734" stroke-dashoffset="13.357"/><path d="M270.20,535.25 L276.84,524.47" stroke-dasharray="2.349 2.349 7.047 2.349" stroke-dashoffset="5.754"/><path d="M276.84,524.47 L283.48,520.33" stroke-dasharray="2.358 2.358 7.073 2.358" stroke-dashoffset="4.338"/><path d="M283.48,520.33 L290.12,511.26" stroke-dasharray="2.479 2.479 7.437 2.479" stroke-dashoffset="12.791"/><path d="M290.12,511.26 L296.76,498.81" stroke-dasharray="2.267 2.267 6.800 2.267" stroke-dashoffset="8.370"/><path d="M296.76,498.81 L303.40,489.34" stroke-dasharray="2.443 2.443 7.329 2.443" stroke-dashoffset="9.576"/><path d="M303.40,489.34 L310.04,481.81" stroke-dasharray="2.666 2.666 7.999 2.666" stroke-dashoffset="7.072"/><path d="M310.04,481.81 L316.68,473.15" stroke-dasharray="2.520 2.520 7.560 2.520" stroke-dashoffset="1.055"/><path d="M316.68,473.15 L323.32,461.32" stroke-dasharray="2.294 2.294 6.881 2.294" stroke-dashoffset="10.893"/><path d="M323.32,461.32 L329.96,448.79" stroke-dasharray="2.263 2.263 6.790 2.263" stroke-dashoffset="10.556"/><path d="M329.96,448.79 L336.60,438.83" stroke-dasharray="2.404 2.404 7.212 2.404" stroke-dashoffset="11.849"/><path d="M336.60,438.83 L343.24,432.82" stroke-dasharray="2.698 2.698 8.095 2.698" stroke-dashoffset="10.544"/><path d="M343.24,432.82 L349.88,421.52" stroke-dasharray="2.320 2.320 6.959 2.320" stroke-dashoffset="2.848"/><path d="M349.88,421.52 L356.52,411.02" stroke-dasharray="2.366 2.366 7.099 2.366" stroke-dashoffset="2.077"/><path d="M356.52,411.02 L363.16,397.72" stroke-dasharray="2.235 2.235 6.706 2.235" stroke-dashoffset="0.284"/><path d="M363.16,397.72 L369.80,386.73" stroke-dasharray="2.337 2.337 7.010 2.337" stroke-dashoffset="1.821"/><path d="M369.80,386.73 L376.44,373.24" stroke-dasharray="2.229 2.229 6.687 2.229" stroke-dashoffset="0.612"/><path d="M376.44,373.24 L383.08,357.51" stroke-dasharray="2.171 2.171 6.513 2.171" stroke-dashoffset="2.213"/><path d="M383.08,357.51 L389.72,342.64" stroke-dasharray="2.190 2.190 6.571 2.190" stroke-dashoffset="6.311"/><path d="M389.72,342.64 L396.36,324.97" stroke-dasharray="2.136 2.136 6.409 2.136" stroke-dashoffset="9.221"/><path d="M396.36,324.97 L403.00,305.66" stroke-dasharray="2.115 2.115 6.345 2.115" stroke-dashoffset="2.439"/><path d="M403.00,305.66 L409.64,295.24" stroke-dasharray="2.371 2.371 7.114 2.371" stroke-dashoffset="11.400"/><path d="M409.64,295.24 L416.28,284.23" stroke-dasharray="2.336 2.336 7.008 2.336" stroke-dashoffset="9.390"/><path d="M416.28,284.23 L422.92,267.74" stroke-dasharray="2.156 2.156 6.468 2.156" stroke-dashoffset="7.592"/><path d="M422.92,267.74 L429.56,244.10" stroke-dasharray="2.077 2.077 6.232 2.077" stroke-dashoffset="11.982"/><path d="M429.56,244.10 L436.20,218.77" stroke-dasharray="2.068 2.068 6.203 2.068" stroke-dashoffset="11.552"/><path d="M436.20,218.77 L442.84,195.20" stroke-dasharray="2.078 2.078 6.233 2.078" stroke-dashoffset="0.522"/><path d="M442.84,195.20 L449.48,175.96" stroke-dasharray="2.116 2.116 6.348 2.116" stroke-dashoffset="0.085"/><path d="M449.48,175.96 L456.12,168.51" stroke-dasharray="2.678 2.678 8.035 2.678" stroke-dashoffset="9.791"/><path d="M456.12,168.51 L462.76,177.79" stroke-dasharray="2.460 2.460 7.379 2.460" stroke-dashoffset="3.401"/><path d="M462.76,177.79 L469.40,160.91" stroke-dasharray="2.149 2.149 6.448 2.149" stroke-dashoffset="0.046"/><path d="M469.40,160.91 L476.04,143.78" stroke-dasharray="2.145 2.145 6.435 2.145" stroke-dashoffset="5.280"/><path d="M476.04,143.78 L482.68,124.07" stroke-dasharray="2.110 2.110 6.331 2.110" stroke-dashoffset="10.598"/><path d="M482.68,124.07 L489.32,107.48" stroke-dasharray="2.154 2.154 6.463 2.154" stroke-dashoffset="6.205"/><path d="M489.32,107.48 L495.96,85.78" stroke-dasharray="2.092 2.092 6.275 2.092" stroke-dashoffset="10.821"/><path d="M495.96,85.78 L502.60,65.87" stroke-dasharray="2.108 2.108 6.325 2.108" stroke-dashoffset="8.486"/></g>
<rect x="137" y="651" width="1" height="4" fill="#333"/>
<text x="137.30" y="669" font-size="12.05" fill="#4d4d4d" text-anchor="middle">1960</text>
<rect x="270" y="651" width="1" height="4" fill="#333"/>
<text x="270.30" y="669" font-size="12.05" fill="#4d4d4d" text-anchor="middle">1980</text>
<rect x="403" y="651" width="1" height="4" fill="#333"/>
<text x="403.30" y="669" font-size="12.05" fill="#4d4d4d" text-anchor="middle">2000</text>
<rect x="115" y="623" width="4" height="1" fill="#333"/>
<text x="111.6" y="629" font-size="12.05" fill="#4d4d4d" text-anchor="end">$0M</text>
<rect x="115" y="469" width="4" height="1" fill="#333"/>
<text x="111.6" y="475" font-size="12.05" fill="#4d4d4d" text-anchor="end">$5,000,000M</text>
<rect x="115" y="314" width="4" height="1" fill="#333"/>
<text x="111.6" y="320" font-size="12.05" fill="#4d4d4d" text-anchor="end">$10,000,000M</text>
<rect x="115" y="159" width="4" height="1" fill="#333"/>
<text x="111.6" y="165" font-size="12.05" fill="#4d4d4d" text-anchor="end">$15,000,000M</text>
<text x="319.8" y="688" font-size="14.6" fill="#000" text-anchor="middle">Year</text>
<text transform="translate(28.2,344.4) rotate(-90)" font-size="14.6" fill="#000" text-anchor="middle">GDP</text>
<text x="544.2" y="256" font-size="14.6" fill="#000">Country</text>
<rect x="545" y="262" width="22" height="22" fill="#f2f2f2"/>
<line x1="546" y1="272.5" x2="564" y2="272.5" stroke="#F8766D" stroke-width="1"/>
<text x="569.9" y="278" font-size="12.25" fill="#000">Canada</text>
<rect x="545" y="285" width="22" height="22" fill="#f2f2f2"/>
<line x1="546" y1="295.5" x2="564" y2="295.5" stroke="#CD9600" stroke-width="1" stroke-dasharray="2 2"/>
<text x="569.9" y="301" font-size="12.25" fill="#000">China</text>
<rect x="545" y="308" width="22" height="22" fill="#f2f2f2"/>
<line x1="546" y1="318.5" x2="564" y2="318.5" stroke="#7CAE00" stroke-width="1" stroke-dasharray="4 2"/>
<text x="569.9" y="324" font-size="12.25" fill="#000">Germany</text>
<rect x="545" y="331" width="22" height="22" fill="#f2f2f2"/>
<line x1="546" y1="341.5" x2="564" y2="341.5" stroke="#00BE67" stroke-width="1" stroke-dasharray="4 4"/>
<text x="569.9" y="347" font-size="12.25" fill="#000">Israel</text>
<rect x="545" y="354" width="22" height="22" fill="#f2f2f2"/>
<line x1="546" y1="364.5" x2="564" y2="364.5" stroke="#00BFC4" stroke-width="1" stroke-dasharray="1 3"/>
<text x="569.9" y="370" font-size="12.25" fill="#000">Japan</text>
<rect x="545" y="377" width="22" height="22" fill="#f2f2f2"/>
<line x1="546" y1="387.5" x2="564" y2="387.5" stroke="#00A9FF" stroke-width="1" stroke-dasharray="1 3 4 3"/>
<text x="569.9" y="393" font-size="12.25" fill="#000">Singapore</text>
<rect x="545" y="400" width="22" height="22" fill="#f2f2f2"/>
<line x1="546" y1="411.5" x2="564" y2="411.5" stroke="#C77CFF" stroke-width="1" stroke-dasharray="7 3"/>
<text x="569.9" y="417" font-size="12.25" fill="#000" letter-spacing="0.15">United Kingdom</text>
<rect x="545" y="423" width="22" height="22" fill="#f2f2f2"/>
<line x1="546" y1="434.5" x2="564" y2="434.5" stroke="#FF61CC" stroke-width="1" stroke-dasharray="2 2 6 2"/>
<text x="569.9" y="440" font-size="12.25" fill="#000">United States</text>
</svg></body></html>
